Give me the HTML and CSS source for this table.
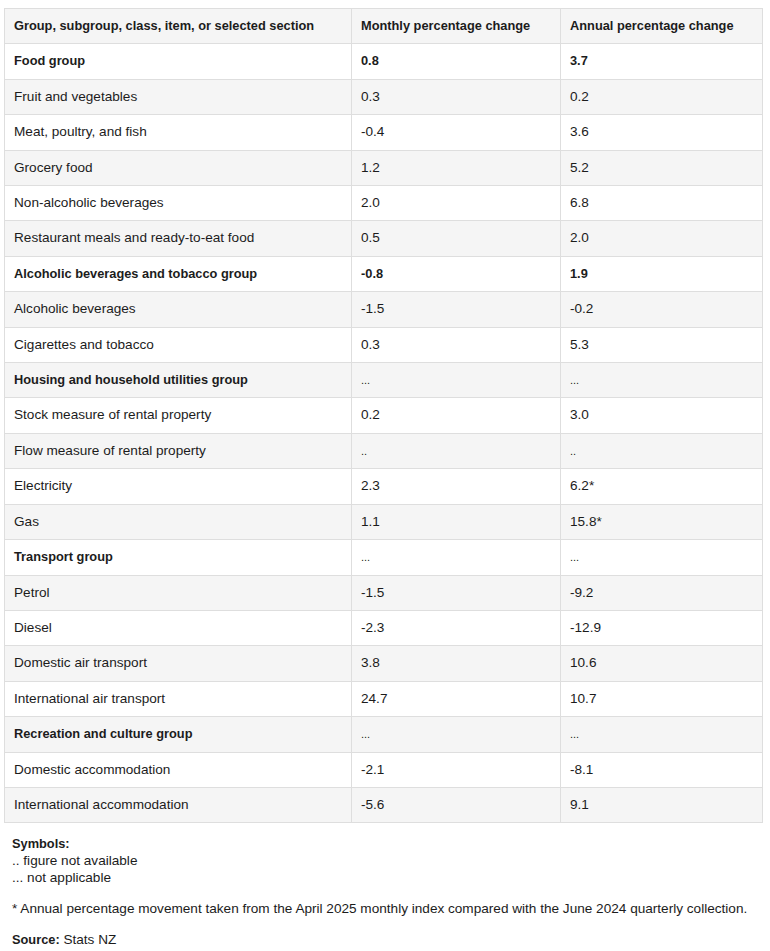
FILE: index.html
```html
<!DOCTYPE html>
<html lang="en">
<head>
<meta charset="utf-8">
<title>CPI selected price changes</title>
<link rel="stylesheet" href="styles.css">
</head>
<body>
<div class="page">
  <div class="table-wrap">
    <table class="data">
      <colgroup>
        <col class="c1"><col class="c2"><col class="c3">
      </colgroup>
      <thead>
        <tr><th>Group, subgroup, class, item, or selected section</th><th>Monthly percentage change</th><th>Annual percentage change</th></tr>
      </thead>
      <tbody>
        <tr class="grp"><td>Food group</td><td>0.8</td><td>3.7</td></tr>
        <tr><td>Fruit and vegetables</td><td>0.3</td><td>0.2</td></tr>
        <tr><td>Meat, poultry, and fish</td><td>-0.4</td><td>3.6</td></tr>
        <tr><td>Grocery food</td><td>1.2</td><td>5.2</td></tr>
        <tr><td>Non-alcoholic beverages</td><td>2.0</td><td>6.8</td></tr>
        <tr><td>Restaurant meals and ready-to-eat food</td><td>0.5</td><td>2.0</td></tr>
        <tr class="grp"><td>Alcoholic beverages and tobacco group</td><td>-0.8</td><td>1.9</td></tr>
        <tr><td>Alcoholic beverages</td><td>-1.5</td><td>-0.2</td></tr>
        <tr><td>Cigarettes and tobacco</td><td>0.3</td><td>5.3</td></tr>
        <tr class="grp"><td>Housing and household utilities group</td><td class="sym">...</td><td class="sym">...</td></tr>
        <tr><td>Stock measure of rental property</td><td>0.2</td><td>3.0</td></tr>
        <tr><td>Flow measure of rental property</td><td class="sym">..</td><td class="sym">..</td></tr>
        <tr><td>Electricity</td><td>2.3</td><td>6.2*</td></tr>
        <tr><td>Gas</td><td>1.1</td><td>15.8*</td></tr>
        <tr class="grp"><td>Transport group</td><td class="sym">...</td><td class="sym">...</td></tr>
        <tr><td>Petrol</td><td>-1.5</td><td>-9.2</td></tr>
        <tr><td>Diesel</td><td>-2.3</td><td>-12.9</td></tr>
        <tr><td>Domestic air transport</td><td>3.8</td><td>10.6</td></tr>
        <tr><td>International air transport</td><td>24.7</td><td>10.7</td></tr>
        <tr class="grp"><td>Recreation and culture group</td><td class="sym">...</td><td class="sym">...</td></tr>
        <tr><td>Domestic accommodation</td><td>-2.1</td><td>-8.1</td></tr>
        <tr><td>International accommodation</td><td>-5.6</td><td>9.1</td></tr>
      </tbody>
    </table>
  </div>
  <div class="notes">
    <p class="symbols"><strong>Symbols:</strong><br>.. figure not available<br>... not applicable</p>
    <p>* Annual percentage movement taken from the April 2025 monthly index compared with the June 2024 quarterly collection.</p>
    <p><strong>Source:</strong> Stats NZ</p>
  </div>
</div>
</body>
</html>
```
FILE: styles.css
```css
html, body {
  margin: 0;
  padding: 0;
  background: #ffffff;
}
body {
  font-family: "Liberation Sans", Arial, sans-serif;
  color: #1c1c1c;
  font-size: 13.6px;
}
strong, th {
  font-size: 12.8px;
}
.page {
  padding: 8px 8px 0 4px;
}
.table-wrap {
  width: 758px;
}
.data {
  width: 758px;
  border-collapse: collapse;
  table-layout: fixed;
}
.c1 { width: 347px; }
.c2 { width: 209px; }
.c3 { width: 202px; }
.data th, .data td {
  border: 1px solid #dedede;
  padding: 8px 9px 8px 9px;
  line-height: 18.4px;
  text-align: left;
  vertical-align: middle;
}
.data th {
  font-weight: bold;
  background: #f5f5f5;
}
.data tbody tr:nth-child(even) td {
  background: #f5f5f5;
}
.data tr.grp td {
  font-weight: bold;
  font-size: 12.8px;
}
.data tr.grp td.sym,
.data td.sym {
  font-size: 11px;
  font-weight: normal;
}
.notes {
  padding: 12px 0 0 8px;
  line-height: 17px;
}
.notes p {
  margin: 0 0 14px 0;
}
```
